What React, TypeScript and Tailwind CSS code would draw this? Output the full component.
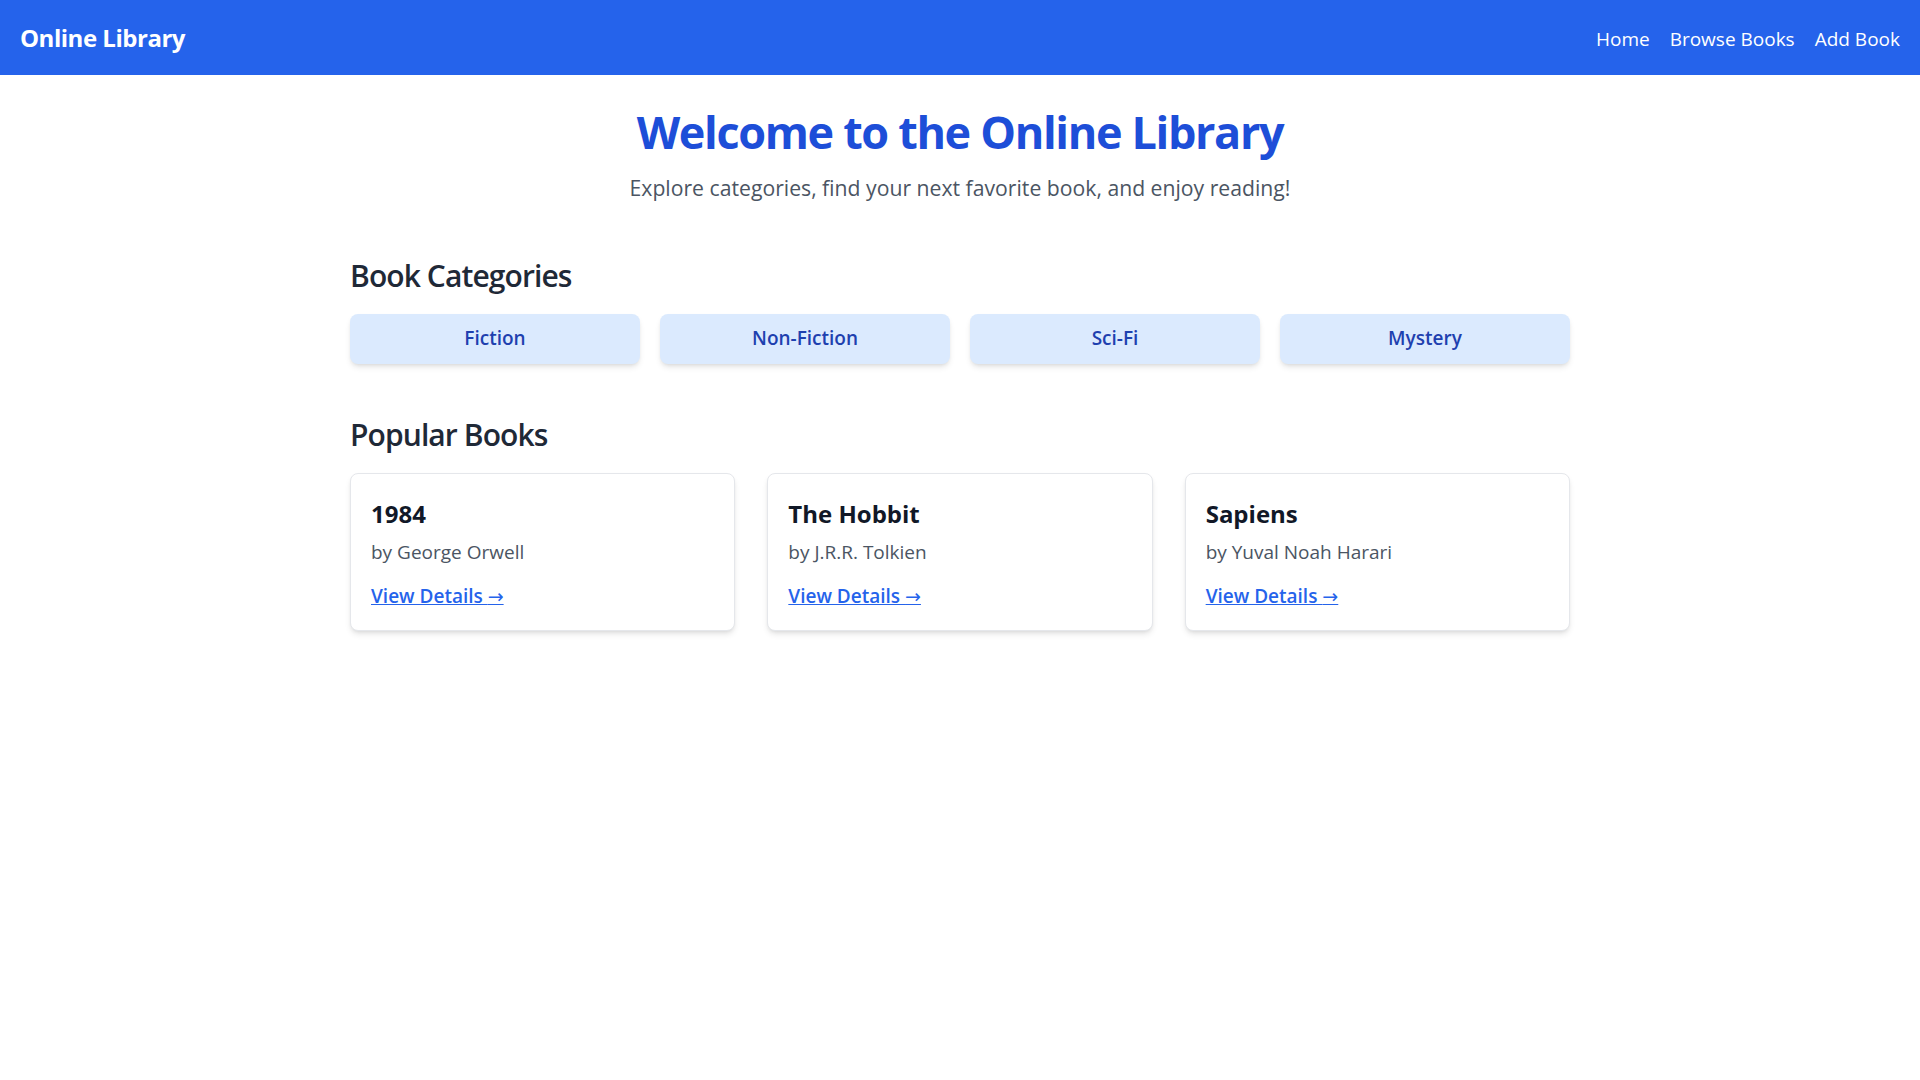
const categories = ["Fiction", "Non-Fiction", "Sci-Fi", "Mystery"];

const books = [
  { title: "1984", author: "George Orwell" },
  { title: "The Hobbit", author: "J.R.R. Tolkien" },
  { title: "Sapiens", author: "Yuval Noah Harari" },
];

export default function App() {
  return (
    <div className="min-h-screen bg-white font-['Open_Sans',sans-serif] text-[#1f2937]">
      <header className="flex h-[75px] items-center justify-between bg-[#2563eb] px-5 text-white">
        <h1 className="text-2xl font-bold tracking-[-0.02em]">Online Library</h1>
        <nav className="mt-1 flex gap-5 text-[19px]">
          <a href="#">Home</a>
          <a href="#">Browse Books</a>
          <a href="#">Add Book</a>
        </nav>
      </header>

      <main className="mx-auto max-w-[1220px] pb-8 pt-[31px]">
        <section className="text-center">
          <h2 className="text-[45px] font-bold leading-[1.15] tracking-[-0.03em] text-[#1d4ed8]">
            Welcome to the Online Library
          </h2>
          <p className="mt-3.5 text-[21.2px] text-[#4b5563]">
            Explore categories, find your next favorite book, and enjoy reading!
          </p>
        </section>

        <section className="mt-[54px]">
          <h3 className="mb-5 text-3xl font-semibold tracking-[-0.03em]">Book Categories</h3>
          <div className="grid grid-cols-4 gap-5">
            {categories.map((c) => (
              <button
                key={c}
                className="h-[50px] rounded-lg bg-[#dbeafe] text-[19px] font-semibold text-[#1e40af] shadow-md"
              >
                {c}
              </button>
            ))}
          </div>
        </section>

        <section className="mt-[53px]">
          <h3 className="mb-5 text-3xl font-semibold tracking-[-0.03em]">Popular Books</h3>
          <div className="grid grid-cols-3 gap-8">
            {books.map((b) => (
              <div key={b.title} className="rounded-lg border border-gray-200 bg-white px-5 pb-[19px] pt-6 shadow-md">
                <h4 className="text-2xl font-bold text-[#111827]">{b.title}</h4>
                <p className="mt-2 text-[19px] text-[#4b5563]">by {b.author}</p>
                <a href="#" className="mt-4 inline-block text-[19px] font-semibold text-[#2563eb] underline">
                  View Details <span className="font-['DejaVu_Sans',sans-serif] text-[19px] font-normal">→</span>
                </a>
              </div>
            ))}
          </div>
        </section>
      </main>
    </div>
  );
}
